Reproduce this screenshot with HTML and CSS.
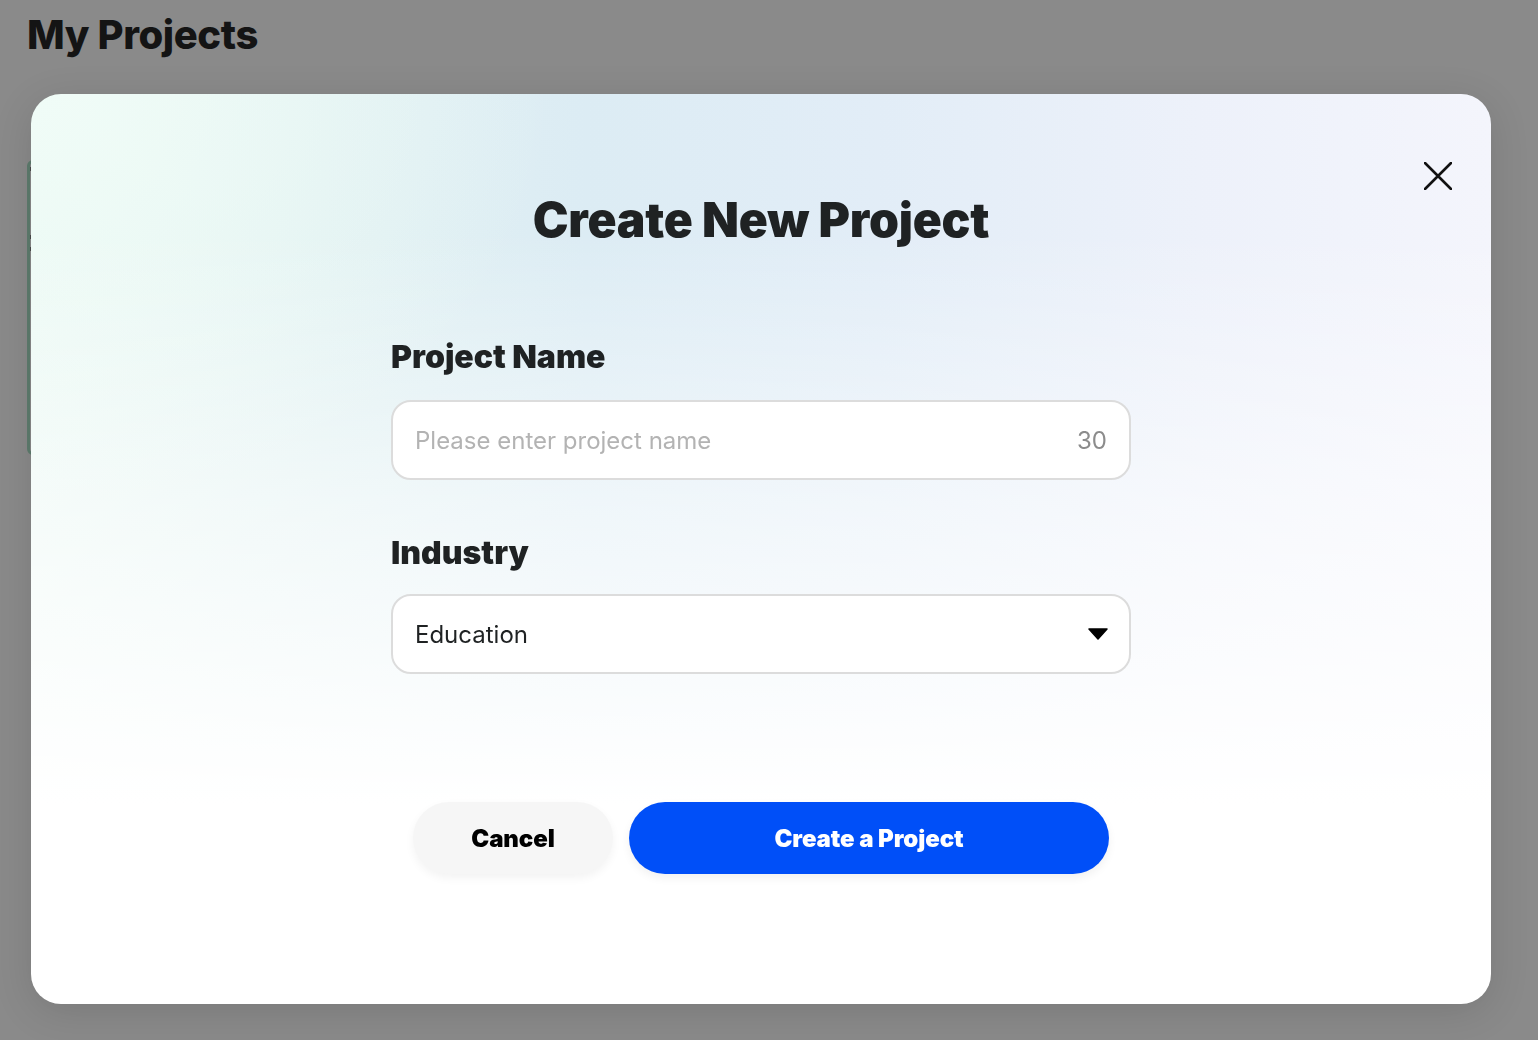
FILE: index.html
```html
<!DOCTYPE html>
<html lang="en">
<head>
    <meta charset="UTF-8">
    <title>My Projects</title>
    <link rel="stylesheet" href="styles.css">
</head>
<body>
<div class="page">
    <h1 class="page-title">My Projects</h1>
    <div class="project-list">
        <div class="project-card">
            <span class="mark"></span>
            <span class="mark short"></span>
            <span class="mark"></span>
        </div>
    </div>
</div>

<div class="overlay">
    <div class="modal">
        <button class="close" type="button" aria-label="Close">
            <svg width="28" height="28" viewBox="0 0 28 28">
                <path d="M1 1 L27 27 M27 1 L1 27" stroke="#111" stroke-width="2.6" stroke-linecap="round"/>
            </svg>
        </button>
        <h2 class="modal-title">Create New Project</h2>

        <div class="form">
            <label class="field-label">Project Name</label>
            <div class="field">
                <input class="field-input" type="text" placeholder="Please enter project name">
                <span class="counter">30</span>
            </div>

            <label class="field-label">Industry</label>
            <div class="field select">
                <span class="field-value">Education</span>
                <svg class="caret" width="20" height="12" viewBox="0 0 20 12">
                    <path d="M1 1 H19 L10 11 Z" fill="#000" stroke="#000" stroke-width="1.5" stroke-linejoin="round"/>
                </svg>
            </div>
        </div>

        <div class="actions">
            <button class="btn btn-cancel" type="button">Cancel</button>
            <button class="btn btn-primary" type="button">Create a Project</button>
        </div>
    </div>
</div>
</body>
</html>
```

FILE: styles.css
```css
* {
    padding: 0;
    margin: 0;
    box-sizing: border-box;
}

body {
    background: #8a8a8a;
    font-family: Inter, "Noto Sans", sans-serif;
    color: #1f2223;
    width: 1538px;
    height: 1040px;
    overflow: hidden;
}

.page {
    padding: 11px 27px;
}

.page-title {
    font-size: 40px;
    line-height: 48px;
    font-weight: 800;
    color: #141414;
    letter-spacing: -0.4px;
}

.project-list {
    margin-top: 101px;
}

.project-card {
    width: 320px;
    height: 295px;
    border: 3px solid #5e7c6e;
    border-radius: 6px;
    padding: 4px 0;
    display: flex;
    flex-direction: column;
    gap: 8px;
}

.project-card .mark {
    width: 30px;
    height: 4px;
    background: #4a4a4a;
}

.project-card .mark.short {
    margin-top: 56px;
}

/* 弹窗 */
.overlay {
    position: fixed;
    top: 0;
    left: 0;
    right: 0;
    bottom: 0;
    padding: 94px 0 0 31px;
}

.modal {
    position: relative;
    width: 1460px;
    height: 910px;
    border-radius: 30px;
    padding-top: 98px;
    box-shadow: 0 8px 40px rgba(0, 0, 0, 0.12);
    background:
        linear-gradient(180deg, rgba(255, 255, 255, 0) 15%, rgba(255, 255, 255, 0.55) 45%, #fff 78%),
        radial-gradient(ellipse 520px 420px at 0% 0%, #f0fcf7 0%, rgba(240, 252, 247, 0) 100%),
        linear-gradient(90deg, #eaf8f3 0%, #e1f1f2 20%, #dcecf4 38%, #e2edf7 58%, #edf1fa 80%, #f4f5fc 100%);
    display: flex;
    flex-direction: column;
    align-items: center;
}

.close {
    position: absolute;
    top: 68px;
    right: 39px;
    width: 28px;
    height: 28px;
    background: none;
    border: 0;
    cursor: pointer;
}

.close svg {
    display: block;
}

.modal-title {
    font-size: 48px;
    line-height: 56px;
    font-weight: 900;
    letter-spacing: -0.2px;
    color: #1f2223;
}

.form {
    width: 740px;
    margin-top: 91px;
    display: flex;
    flex-direction: column;
}

.field-label {
    font-size: 32px;
    line-height: 36px;
    font-weight: 900;
    color: #1f2223;
}

.field {
    margin-top: 25px;
    height: 80px;
    border: 2px solid #dcdcdc;
    border-radius: 20px;
    background: #fff;
    display: flex;
    align-items: center;
    padding: 0 22px;
}

.field + .field-label {
    margin-top: 55px;
}

.field-input {
    flex: 1;
    border: 0;
    outline: none;
    background: transparent;
    font-family: Inter, "Noto Sans", sans-serif;
    font-size: 24px;
    color: #1f2223;
}

.field-input::placeholder {
    color: #b3b3b3;
}

.counter {
    font-size: 24px;
    color: #8c8c8c;
}

.select {
    margin-top: 23px;
    justify-content: space-between;
    padding-right: 21px;
}

.field-value {
    font-size: 24px;
    color: #1f2223;
}

.actions {
    margin-top: 128px;
    display: flex;
    gap: 16px;
}

.btn {
    height: 72px;
    border: 0;
    border-radius: 36px;
    font-family: Inter, "Noto Sans", sans-serif;
    font-size: 24px;
    font-weight: 900;
    letter-spacing: -0.1px;
    cursor: pointer;
}

.btn-cancel {
    width: 200px;
    background: #f6f6f6;
    color: #000;
    box-shadow: 0 4px 10px rgba(0, 0, 0, 0.05);
}

.btn-primary {
    width: 480px;
    background: #004ff8;
    color: #fff;
    box-shadow: 0 4px 10px rgba(0, 0, 0, 0.06);
}
```
